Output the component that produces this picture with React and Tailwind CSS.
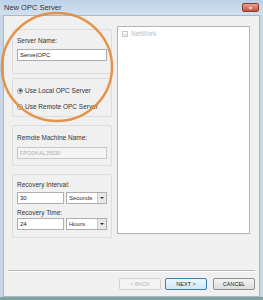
const font = { fontFamily: '"Liberation Sans", Arial, sans-serif' };

function Group({ className, children }) {
  return (
    <div className={`border border-[#dcdcdc] rounded-[2px] px-[4px] ${className}`}>
      {children}
    </div>
  );
}

function Label({ children, className = '' }) {
  return <div className={`text-[6.5px] leading-[9px] text-[#333] ${className}`}>{children}</div>;
}

function Select({ value }) {
  return (
    <div className="flex h-[12px] w-[43px] border border-[#adadad] bg-white">
      <span className="flex-1 text-[6px] leading-[10px] pl-[2px] text-[#333]">{value}</span>
      <span className="w-[9px] border-l border-[#c8c8c8] bg-[#e8e8e8] flex items-center justify-center">
        <span className="w-0 h-0 border-l-[2px] border-r-[2px] border-t-[2px] border-l-transparent border-r-transparent border-t-[#333]" />
      </span>
    </div>
  );
}

function Radio({ checked, label }) {
  return (
    <div className="flex items-center gap-[2px] h-[9px]">
      <span className="w-[6px] h-[6px] rounded-full border border-[#9a9a9a] bg-[#f6f6f6] flex items-center justify-center">
        {checked && <span className="w-[3px] h-[3px] rounded-full bg-[#3a5f8a]" />}
      </span>
      <span className="text-[6.5px] leading-[9px] text-[#333]">{label}</span>
    </div>
  );
}

export default function App() {
  return (
    <div className="relative w-[263px] h-[300px] overflow-hidden bg-[#c6d6e6] flex flex-col" style={font}>
      <div className="h-[15px] flex items-center justify-between pl-[4px] pr-[4px] bg-gradient-to-b from-[#bcd1e8] to-[#d3e1ef]">
        <span className="text-[7.5px] text-[#333]">New OPC Server</span>
        <span className="w-[17px] h-[9px] rounded-[2px] bg-gradient-to-b from-[#e4a48e] to-[#c4523c] border border-[#8a3a2a] flex items-center justify-center text-white text-[6px] leading-none font-bold">
          ×
        </span>
      </div>

      <div className="flex-1 mx-[3px] bg-[#f0f0f0] border border-[#a9b8c8] flex flex-col">
        <div className="flex gap-[5px] pl-[8px] pt-[10px]">
          <div className="w-[100px] flex flex-col">
            <Group className="mt-[3px] pt-[6px] pb-[12px]">
              <Label>Server Name:</Label>
              <div className="mt-[4px] h-[12px] border border-[#adadad] bg-white text-[6px] leading-[10px] pl-[2px] text-[#222]">
                Serve|OPC
              </div>
            </Group>
            <Group className="mt-[4px] pt-[7px] pb-[5px]">
              <Radio checked label="Use Local OPC Server" />
              <div className="h-[7px]" />
              <Radio label="Use Remote OPC Server" />
            </Group>
            <Group className="mt-[8px] pt-[7px] pb-[6px]">
              <Label>Remote Machine Name:</Label>
              <div className="mt-[5px] h-[12px] border border-[#c8c8c8] bg-[#f4f4f4] text-[5.5px] leading-[10px] pl-[2px] text-[#b0b0b0]">
                FPODKALJ5530
              </div>
            </Group>
            <Group className="mt-[8px] pt-[5px] pb-[7px]">
              <Label>Recovery Interval:</Label>
              <div className="mt-[3px] flex gap-[2px]">
                <div className="w-[49px] h-[12px] border border-[#adadad] bg-white text-[6px] leading-[10px] pl-[2px] text-[#222]">30</div>
                <Select value="Seconds" />
              </div>
              <Label className="mt-[4px]">Recovery Time:</Label>
              <div className="mt-[1px] flex gap-[2px]">
                <div className="w-[49px] h-[12px] border border-[#adadad] bg-white text-[6px] leading-[10px] pl-[2px] text-[#222]">24</div>
                <Select value="Hours" />
              </div>
            </Group>
          </div>

          <div className="w-[133px] h-[208px] border border-[#b4b4b4] bg-white pl-[4px] pt-[2px]">
            <div className="flex items-center gap-[3px]">
              <span className="w-[6px] h-[6px] border border-[#c4c4c4] flex items-center justify-center text-[6px] leading-none text-[#bbb]">+</span>
              <span className="text-[6.5px] text-[#bdbdbd]">NetWork</span>
            </div>
          </div>
        </div>

        <div className="mt-auto mx-[4px] border-t border-[#b8b8b8] border-b border-b-white" />
        <div className="flex justify-end gap-[4px] pr-[4px] pt-[6px] pb-[6px]">
          <div className="w-[42px] h-[12px] border border-[#d0d0d0] rounded-[2px] bg-[#f4f4f4] flex items-center justify-center text-[5.5px] text-[#b8b8b8]">&lt; BACK</div>
          <div className="w-[42px] h-[12px] border border-[#3c7fb1] rounded-[2px] bg-gradient-to-b from-[#eaf6fd] to-[#d0e8f7] flex items-center justify-center text-[5.5px] text-[#222]">NEXT &gt;</div>
          <div className="w-[42px] h-[12px] ml-[2px] border border-[#8e8e8e] rounded-[2px] bg-gradient-to-b from-[#f4f4f4] to-[#dcdcdc] flex items-center justify-center text-[5.5px] text-[#222]">CANCEL</div>
        </div>
      </div>
      <div className="h-[3px] bg-[#7fa59f]" />

      <svg className="absolute left-0 top-0 pointer-events-none" width="263" height="300">
        <ellipse cx="57" cy="67" rx="55" ry="54" fill="none" stroke="#e3893a" strokeWidth="2.5" opacity="0.9" />
      </svg>
    </div>
  );
}
